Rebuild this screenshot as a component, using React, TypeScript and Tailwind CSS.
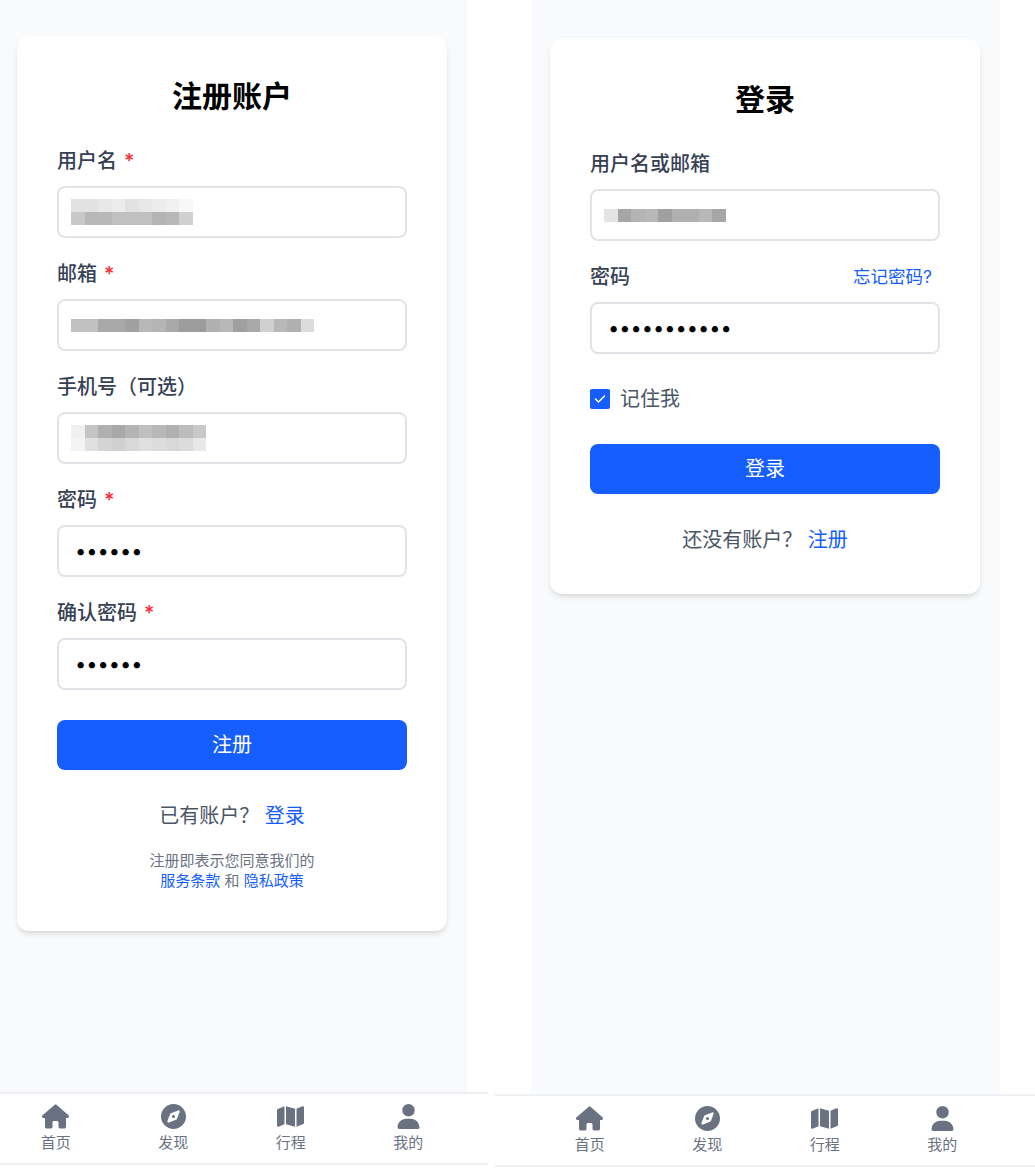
import { FaCompass, FaHouse, FaMap, FaUser } from "react-icons/fa6"
import { FaCheck } from "react-icons/fa6"

const font = "font-['Inter','Noto_Sans_CJK_SC',sans-serif]"

// pixelated stand-ins for the redacted values in the reference
const usernameRows = [
  ["bg-[#e2e2e2]", "bg-[#e2e2e2]", "bg-[#e8e8e8]", "bg-[#ececec]", "bg-[#e2e2e2]", "bg-[#e8e8e8]", "bg-[#ececec]", "bg-[#f0f0f0]", "bg-[#f8f8f8]"],
  ["bg-[#c8c8c8]", "bg-[#b8b8b8]", "bg-[#b8b8b8]", "bg-[#c0c0c0]", "bg-[#c0c0c0]", "bg-[#c0c0c0]", "bg-[#b4b4b4]", "bg-[#b8b8b8]", "bg-[#d0d0d0]"],
]
const emailRows = [
  ["bg-[#c0c0c0]", "bg-[#c0c0c0]", "bg-[#a8a8a8]", "bg-[#a8a8a8]", "bg-[#a0a0a0]", "bg-[#b8b8b8]", "bg-[#b4b4b4]", "bg-[#a8a8a8]", "bg-[#9c9c9c]", "bg-[#9c9c9c]", "bg-[#b0b0b0]", "bg-[#b8b8b8]", "bg-[#a0a0a0]", "bg-[#a8a8a8]", "bg-[#d0d0d0]", "bg-[#b8b8b8]", "bg-[#b0b0b0]", "bg-[#dcdcdc]"],
]
const phoneRows = [
  ["bg-[#f0f0f0]", "bg-[#c4c4c4]", "bg-[#b0b0b0]", "bg-[#a8a8a8]", "bg-[#b4b4b4]", "bg-[#c0c0c0]", "bg-[#b8b8b8]", "bg-[#b0b0b0]", "bg-[#bcbcbc]", "bg-[#c8c8c8]"],
  ["bg-[#f4f4f4]", "bg-[#e0e0e0]", "bg-[#d4d4d4]", "bg-[#d0d0d0]", "bg-[#d8d8d8]", "bg-[#e0e0e0]", "bg-[#dcdcdc]", "bg-[#d8d8d8]", "bg-[#dcdcdc]", "bg-[#e8e8e8]"],
]
const loginRows = [
  ["bg-[#e4e4e4]", "bg-[#a6a6a6]", "bg-[#b4b4b4]", "bg-[#b8b8b8]", "bg-[#a0a0a0]", "bg-[#b0b0b0]", "bg-[#b0b0b0]", "bg-[#b8b8b8]", "bg-[#a6a6a6]"],
]

function Mosaic({ rows }: { rows: string[][] }) {
  return (
    <div className="flex flex-col">
      {rows.map((row, i) => (
        <div key={i} className="flex h-[13px]">
          {row.map((cell, j) => (
            <span key={j} className={`h-full w-[13.5px] ${cell}`} />
          ))}
        </div>
      ))}
    </div>
  )
}

function Star() {
  return <span className="ml-[7px] text-red-500">*</span>
}

function Field({ label, required, rows, password }: { label: string; required?: boolean; rows?: string[][]; password?: string }) {
  return (
    <div className="mb-[22px]">
      <label className="block h-[28px] text-[20px] leading-[28px] font-medium text-gray-700">
        {label}
        {required && <Star />}
      </label>
      <Box rows={rows} password={password} />
    </div>
  )
}

function Box({ rows, password }: { rows?: string[][]; password?: string }) {
  return (
    <div className="mt-[11px] flex h-[52px] items-center rounded-lg border-2 border-[#e1e3e9] bg-white px-[12px]">
      {rows && <Mosaic rows={rows} />}
      {password && (
        <input
          readOnly
          type="password"
          value={password}
          className="w-full bg-transparent px-[4px] text-[20px] text-black outline-none"
        />
      )}
    </div>
  )
}

function BottomNav() {
  const items = [
    { label: "首页", Icon: FaHouse },
    { label: "发现", Icon: FaCompass },
    { label: "行程", Icon: FaMap },
    { label: "我的", Icon: FaUser },
  ]
  return (
    <>
      {items.map(({ label, Icon }) => (
        <div key={label} className="flex w-[117.5px] flex-col items-center">
          <Icon className="h-[25px] w-[27px] text-gray-500" />
          <span className="mt-[4px] text-[15px] leading-[20px] text-gray-500">{label}</span>
        </div>
      ))}
    </>
  )
}

function RegisterCard() {
  return (
    <div className="mx-[17px] mt-[36px] w-[430px] rounded-xl bg-white p-[40px] shadow-md">
      <h1 className="mb-[31px] text-center text-[30px] leading-[40px] font-bold text-black">注册账户</h1>
      <Field label="用户名" required rows={usernameRows} />
      <Field label="邮箱" required rows={emailRows} />
      <Field label="手机号（可选）" rows={phoneRows} />
      <Field label="密码" required password="abcdef" />
      <Field label="确认密码" required password="abcdef" />
      <button className="mt-[30px] -translate-y-[22px] h-[50px] w-full rounded-lg bg-blue-600 text-[20px] text-white">注册</button>
      <p className="mt-[10px] text-center text-[20px] leading-[28px] text-gray-600">
        已有账户？ <a className="text-blue-600">登录</a>
      </p>
      <p className="mt-[21px] text-center text-[15px] leading-[20px] text-gray-500">
        注册即表示您同意我们的
        <br />
        <a className="text-blue-600">服务条款</a> 和 <a className="text-blue-600">隐私政策</a>
      </p>
    </div>
  )
}

function LoginCard() {
  return (
    <div className="mx-[19px] mt-[39px] w-[430px] rounded-xl bg-white p-[40px] shadow-md">
      <h1 className="mb-[31px] text-center text-[30px] leading-[40px] font-bold text-black">登录</h1>
      <div className="mb-[22px]">
        <label className="block h-[28px] text-[20px] leading-[28px] font-medium text-gray-700">用户名或邮箱</label>
        <Box rows={loginRows} />
      </div>
      <div>
        <div className="flex h-[28px] items-center justify-between">
          <label className="text-[20px] leading-[28px] font-medium text-gray-700">密码</label>
          <a className="pr-[8px] text-[17.5px] text-blue-600">忘记密码?</a>
        </div>
        <Box password="abcdefghijk" />
      </div>
      <div className="mt-[31px] flex h-[28px] items-center">
        <span className="flex h-[20px] w-[20px] items-center justify-center rounded-[2px] bg-blue-600">
          <FaCheck className="h-[12px] w-[12px] text-white" />
        </span>
        <span className="ml-[10px] text-[20px] leading-[28px] text-gray-600">记住我</span>
      </div>
      <button className="mt-[31px] h-[50px] w-full rounded-lg bg-blue-600 text-[20px] text-white">登录</button>
      <p className="mt-[32px] text-center text-[20px] leading-[28px] text-gray-600">
        还没有账户？ <a className="text-blue-600">注册</a>
      </p>
    </div>
  )
}

export default function App() {
  return (
    <div className={`flex h-[1170px] w-[1035px] bg-white ${font}`}>
      <div className="flex w-[488px] flex-col">
        <div className="w-[467px] flex-1 bg-gray-50">
          <RegisterCard />
        </div>
        <nav className="mb-[5px] flex h-[73px] items-center border-y-2 border-[#eef0f4] bg-white">
          <div className="-ml-[3px] flex">
            <BottomNav />
          </div>
        </nav>
      </div>
      <div className="ml-[7px] flex w-[540px] flex-col">
        <div className="ml-[36px] w-[469px] flex-1 bg-gray-50">
          <LoginCard />
        </div>
        <nav className="mb-[3px] flex h-[73px] items-center border-y-2 border-[#eef0f4] bg-white">
          <div className="ml-[36px] flex">
            <BottomNav />
          </div>
        </nav>
      </div>
    </div>
  )
}
